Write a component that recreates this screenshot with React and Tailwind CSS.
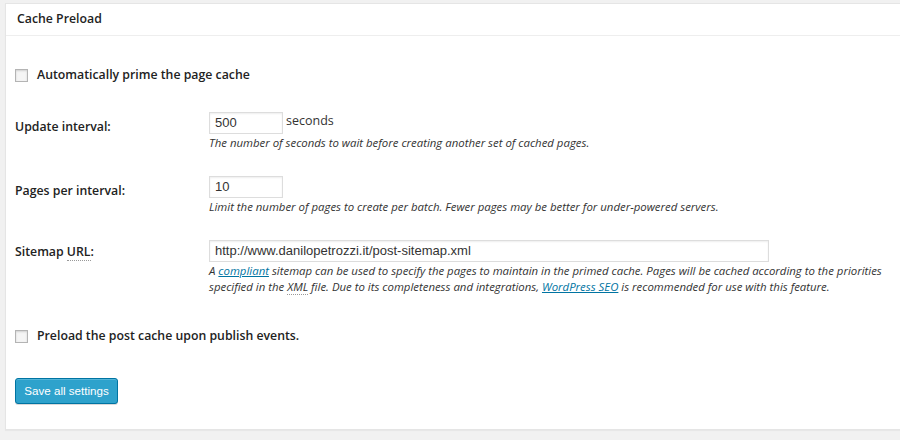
import React from 'react'

const font = "font-['Open_Sans',sans-serif]"

const Check = () => (
  <span className="inline-block w-[13px] h-[13px] border border-[#b4b4b4] bg-[#f5f5f5] shadow-[inset_0_1px_2px_rgba(0,0,0,0.15)] shrink-0" />
)

const Field = ({ value, width }) => (
  <div className={`${width} h-[22px] border border-[#dddddd] bg-white shadow-[inset_0_1px_2px_rgba(0,0,0,0.07)] flex items-center px-[5px] text-[13px] text-[#333] font-['Liberation_Sans',Arial,sans-serif]`}>
    {value}
  </div>
)

const Desc = ({ children }) => (
  <p className="text-[11.4px] leading-[16px] italic text-[#333] mt-[1px] whitespace-nowrap">{children}</p>
)

const App = () => {
  return (
    <div className={`w-[900px] h-[440px] bg-[#f1f1f1] overflow-hidden pt-[3px] pl-[5px] ${font}`}>
      <div className="w-[910px] h-[427px] bg-white border border-[#e5e5e5] shadow-[0_1px_1px_rgba(0,0,0,0.04)]">
        <div className="h-[32px] border-b border-[#eeeeee] flex items-center px-[11px]">
          <h3 className="text-[12.3px] font-semibold text-[#222]">Cache Preload</h3>
        </div>

        <div className="pl-[9px] text-[#222]">
          <label className="flex items-center gap-[9px] mt-[31px] h-[16px]">
            <Check />
            <span className="text-[12.3px] font-semibold">Automatically prime the page cache</span>
          </label>

          <div className="flex mt-[29px]">
            <div className="w-[194px] pt-[6px] text-[12.3px] font-semibold">Update interval:</div>
            <div>
              <div className="flex items-center gap-[3px]">
                <Field value="500" width="w-[74px]" />
                <span className="text-[12.5px] text-[#333] -mt-[3px]">seconds</span>
              </div>
              <Desc>The number of seconds to wait before creating another set of cached pages.</Desc>
            </div>
          </div>

          <div className="flex mt-[25px]">
            <div className="w-[194px] pt-[6px] text-[12.3px] font-semibold">Pages per interval:</div>
            <div>
              <Field value="10" width="w-[74px]" />
              <Desc>Limit the number of pages to create per batch. Fewer pages may be better for under-powered servers.</Desc>
            </div>
          </div>

          <div className="flex mt-[25px]">
            <div className="w-[194px] pt-[3px] text-[12.3px] font-semibold">
              Sitemap <abbr className="no-underline border-b border-dotted border-[#999]">URL</abbr>:
            </div>
            <div>
              <Field value="http://www.danilopetrozzi.it/post-sitemap.xml" width="w-[560px]" />
              <Desc>
                A <a className="text-[#0074a2] underline">compliant</a> sitemap can be used to specify the pages to maintain in the primed cache. Pages will be cached according to the priorities
                <br />
                specified in the <abbr className="no-underline border-b border-dotted border-[#999]">XML</abbr> file. Due to its completeness and integrations, <a className="text-[#0074a2] underline">WordPress SEO</a> is recommended for use with this feature.
              </Desc>
            </div>
          </div>

          <label className="flex items-center gap-[9px] mt-[33px] h-[16px]">
            <Check />
            <span className="text-[12.3px] font-semibold">Preload the post cache upon publish events.</span>
          </label>

          <button className="mt-[34px] h-[26px] w-[103px] rounded-[3px] bg-[#2ea2cc] border border-[#0074a2] shadow-[inset_0_1px_0_rgba(120,200,230,0.5),0_1px_0_rgba(0,0,0,0.15)] text-white text-[11.6px] font-['Liberation_Sans',Arial,sans-serif]">
            Save all settings
          </button>
        </div>
      </div>
    </div>
  )
}

export default App
